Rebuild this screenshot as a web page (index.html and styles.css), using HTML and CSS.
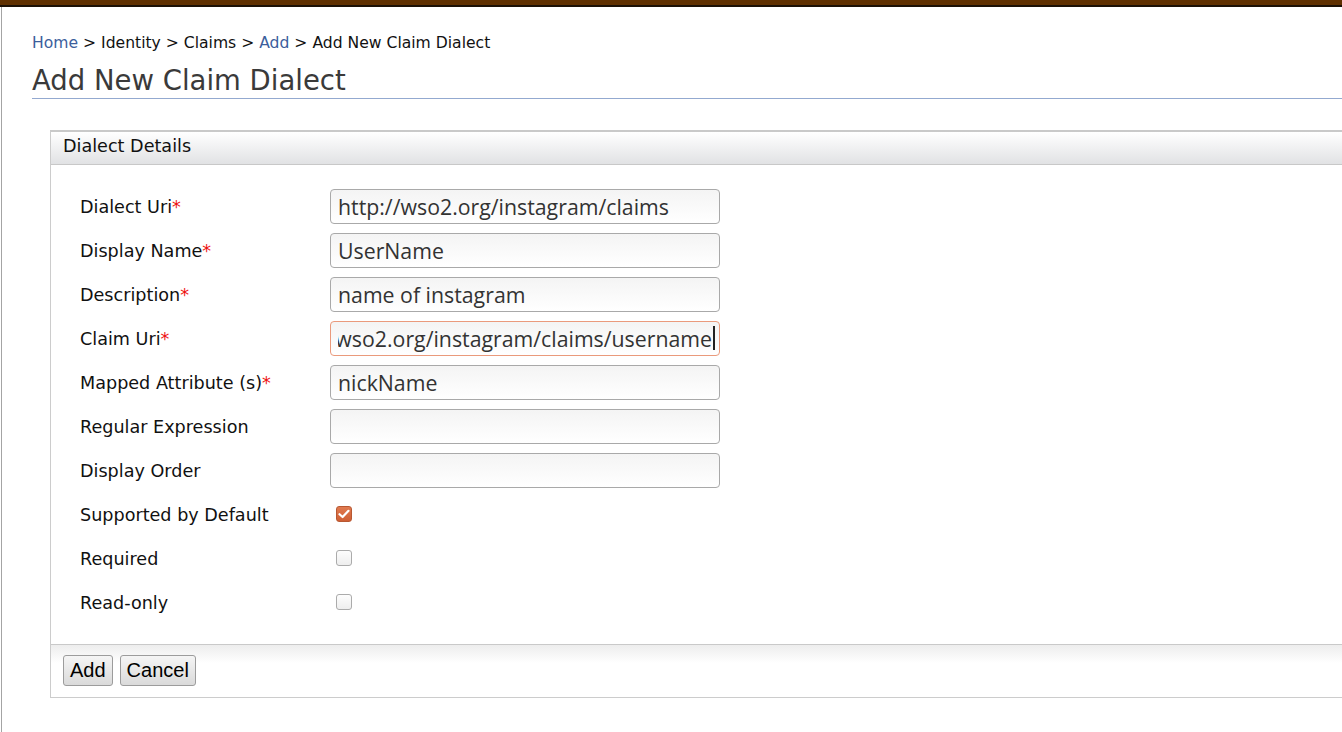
FILE: index.html
```html
<!DOCTYPE html>
<html lang="en">
<head>
<meta charset="utf-8">
<title>Add New Claim Dialect</title>
<link rel="stylesheet" href="styles.css">
</head>
<body>
<div class="topbar"></div>
<div class="page">
  <div class="breadcrumb"><a href="#">Home</a> &gt; Identity &gt; Claims &gt; <a href="#">Add</a> &gt; Add New Claim Dialect</div>
  <h1 class="title">Add New Claim Dialect</h1>
  <div class="panel">
    <div class="panel-head">Dialect Details</div>
    <div class="panel-body">
      <div class="row"><label class="lbl">Dialect Uri<span class="req">*</span></label><input class="field" type="text" value="http://wso2.org/instagram/claims"></div>
      <div class="row"><label class="lbl">Display Name<span class="req">*</span></label><input class="field" type="text" value="UserName"></div>
      <div class="row"><label class="lbl">Description<span class="req">*</span></label><input class="field" type="text" value="name of instagram"></div>
      <div class="row"><label class="lbl">Claim Uri<span class="req">*</span></label><div class="field focused"><div class="clip"><span class="ftext">http://wso2.org/instagram/claims/username</span><span class="caret"></span></div></div></div>
      <div class="row"><label class="lbl">Mapped Attribute (s)<span class="req">*</span></label><input class="field" type="text" value="nickName"></div>
      <div class="row"><label class="lbl">Regular Expression</label><input class="field" type="text" value=""></div>
      <div class="row"><label class="lbl">Display Order</label><input class="field" type="text" value=""></div>
      <div class="row"><label class="lbl">Supported by Default</label><span class="check checked"><svg width="12" height="10" viewBox="0 0 12 10"><path d="M1.5 5.2 L4.6 8 L10.5 1.8" fill="none" stroke="#fff" stroke-width="2.2" stroke-linecap="round" stroke-linejoin="round"/></svg></span></div>
      <div class="row"><label class="lbl">Required</label><span class="check"></span></div>
      <div class="row"><label class="lbl">Read-only</label><span class="check"></span></div>
    </div>
    <div class="panel-foot">
      <button class="btn" type="button">Add</button>
      <button class="btn" type="button">Cancel</button>
    </div>
  </div>
</div>
</body>
</html>
```
FILE: styles.css
```css
html, body {
  margin: 0;
  padding: 0;
  background: #fff;
  overflow: hidden;
}
body {
  font-family: "DejaVu Sans", sans-serif;
  color: #111;
}
.topbar {
  height: 5px;
  background: #5f3000;
  border-bottom: 2px solid #1c1106;
}
.page {
  margin-left: 1px;
  border-left: 1px solid #a4a4a4;
  padding: 26px 0 40px 30px;
  min-height: 700px;
}
.breadcrumb {
  font-size: 15.6px;
  line-height: 20px;
  color: #111;
}
.breadcrumb a {
  color: #3c5e9c;
  text-decoration: none;
}
.title {
  margin: 9px 0 0 0;
  font-weight: normal;
  font-size: 27.5px;
  line-height: 36px;
  height: 36px;
  color: #3a3a3a;
  padding: 0;
  border-bottom: 1px solid #93a9d0;
}
.panel {
  margin: 31px 0 0 18px;
  width: 1400px;
  border: 1px solid #cccccc;
  border-top: 2px solid #c9c9c9;
}
.panel-head {
  height: 32px;
  line-height: 29px;
  padding-left: 12px;
  font-size: 17.6px;
  color: #111;
  background: linear-gradient(#ffffff, #e1e2e4);
  border-bottom: 1px solid #c8c8c8;
}
.panel-body {
  padding: 19px 0 20px 29px;
}
.row {
  display: flex;
  align-items: center;
  height: 44px;
}
.lbl {
  width: 250px;
  font-size: 17.6px;
  line-height: 22px;
  padding-top: 1px;
  color: #111;
}
.req {
  color: #ee1111;
}
.field {
  box-sizing: border-box;
  width: 390px;
  height: 35px;
  border: 1px solid #a9a9a9;
  border-radius: 4px;
  background: linear-gradient(#f4f4f4, #ffffff);
  font-family: "Open Sans", sans-serif;
  font-size: 21.3px;
  color: #333;
  padding: 0 7px;
  margin: 0;
  outline: none;
}
.field.focused {
  display: flex;
  align-items: center;
  border-color: #ea9a7c;
  padding: 0 4px 0 7px;
}
.clip {
  flex: 1;
  display: flex;
  align-items: center;
  justify-content: flex-end;
  overflow: hidden;
  white-space: nowrap;
}
.ftext {
  flex: none;
}
.caret {
  flex: none;
  width: 2px;
  height: 24px;
  background: #222;
  margin-left: 1px;
}
.check {
  box-sizing: border-box;
  display: inline-flex;
  align-items: center;
  justify-content: center;
  width: 16px;
  height: 16px;
  margin-left: 6px;
  border: 1px solid #ababab;
  border-radius: 3px;
  background: linear-gradient(#fdfdfd, #eeeeee);
}
.check.checked {
  border-color: #b85832;
  background: linear-gradient(#e07a50, #cf5f34);
}
.panel-foot {
  border-top: 1px solid #c9c9c9;
  background: linear-gradient(#ededed, #ffffff 18px);
  padding: 10px 0 11px 12px;
  display: flex;
  gap: 7px;
}
.btn {
  height: 31px;
  padding: 0 6px;
  font-family: "Liberation Sans", Arial, sans-serif;
  font-size: 20px;
  color: #000;
  border: 1px solid #9c9c9c;
  border-radius: 3px;
  background: linear-gradient(#f5f5f5, #dadada);
  margin: 0;
}
```
